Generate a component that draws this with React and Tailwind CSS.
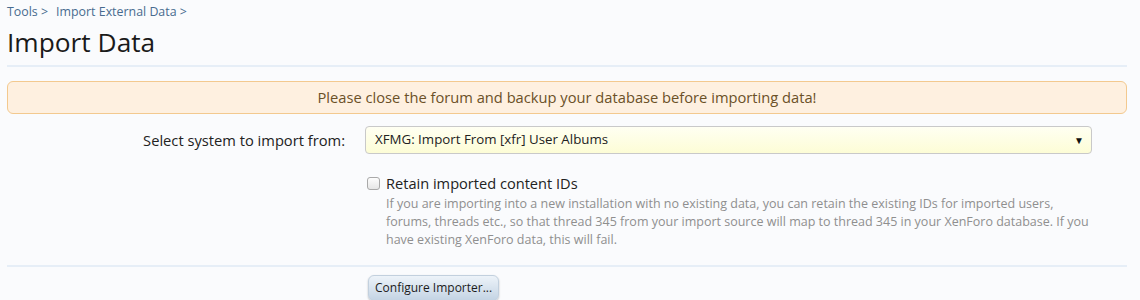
import React from "react";

export default function App() {
  const font = { fontFamily: '"Open Sans", "Noto Sans", sans-serif' };
  return (
    <div className="w-[1140px] h-[300px] overflow-hidden bg-[#fafbfd] text-[#222]" style={font}>
      <div className="px-[7px] pr-[13px]">
        <div className="flex items-center gap-[8px] h-[24px] text-[12.4px] text-[#486b8f]">
          <span>Tools &gt;</span>
          <span>Import External Data &gt;</span>
        </div>
        <h1 className="text-[26.3px] leading-[34px] text-[#1a1a1a] mt-[1px]">Import Data</h1>
        <div className="h-[2px] bg-[#e6eef7] mt-[6px]" />
        <div className="mt-[14px] h-[33px] rounded-[6px] border border-[#f3c98f] bg-[#fef0e0] flex items-center justify-center text-[14.7px] text-[#6b5128]">
          Please close the forum and backup your database before importing data!
        </div>
        <div className="grid grid-cols-[338px_727px] gap-x-[20px] mt-[12px]">
          <div className="text-right text-[14.7px] leading-[28px]">Select system to import from:</div>
          <div className="h-[28px] rounded-[4px] border border-[#c9c9c9] bg-gradient-to-b from-[#fffff2] to-[#fdfdd6] flex items-center justify-between pl-[9px] pr-[7px] text-[13.3px] text-[#222]">
            <span>XFMG: Import From [xfr] User Albums</span>
            <span className="text-[10px] text-[#111]">▼</span>
          </div>
          <div />
          <div className="mt-[20px] pl-[2px]">
            <div className="flex items-center gap-[6px]">
              <span className="w-[13px] h-[13px] rounded-[3px] border border-[#a9a9a9] bg-gradient-to-b from-[#fdfdfd] to-[#e6e6e6]" />
              <span className="text-[14.6px] leading-[18px]">Retain imported content IDs</span>
            </div>
            <p className="pl-[19px] text-[12.5px] leading-[18px] text-[#8f8f8f] mt-[3px]">
              If you are importing into a new installation with no existing data, you can retain the existing IDs for imported users, forums, threads etc., so that thread 345 from your import source will map to thread 345 in your XenForo database. If you have existing XenForo data, this will fail.
            </p>
          </div>
        </div>
        <div className="h-[2px] bg-[#e6eef7] mt-[16px]" />
        <div className="pl-[361px] pt-[7px]">
          <button className="h-[26px] px-[6px] rounded-[6px] border border-[#c2d0de] bg-gradient-to-b from-[#edf3f9] to-[#c4d4e4] shadow-[0_1px_2px_rgba(0,0,0,0.25)] text-[12px] text-[#1b1b1b]">
            Configure Importer...
          </button>
        </div>
      </div>
    </div>
  );
}
